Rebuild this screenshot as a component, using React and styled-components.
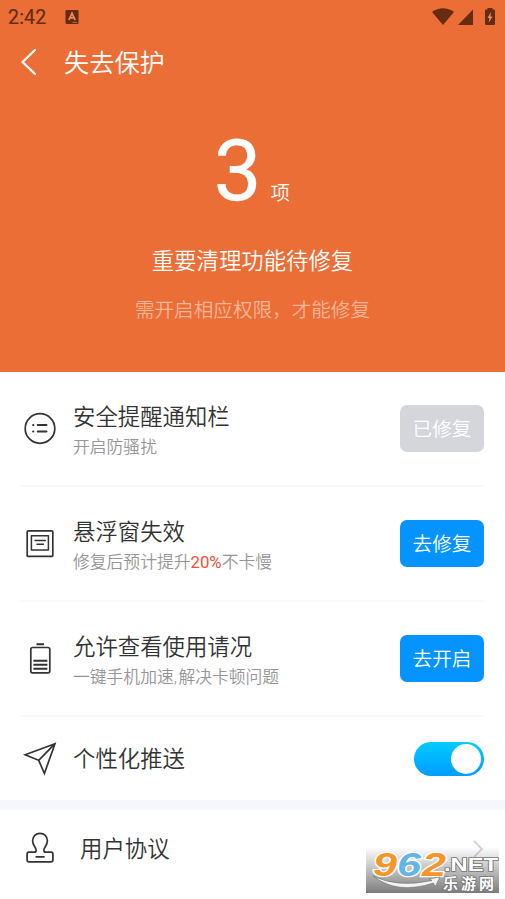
import React from "react";
import styled, { createGlobalStyle } from "styled-components";

const GlobalStyle = createGlobalStyle`
  * { box-sizing: border-box; }
  body {
    margin: 0;
    background: #fff;
    font-family: Roboto, "Noto Sans CJK SC DemiLight", "Noto Sans CJK SC", sans-serif;
    font-weight: 350;
    overflow: hidden;
  }
`;

const Screen = styled.div`
  position: relative;
  width: 505px;
  height: 899px;
  background: #fff;
  display: flex;
  flex-direction: column;
  overflow: hidden;
`;

const Hero = styled.header`
  height: 372px;
  flex: none;
  background: #eb6e37;
  color: #fff;
`;

const StatusBar = styled.div`
  height: 35px;
  padding: 0 8px 0 8px;
  display: flex;
  align-items: center;
  color: #652c12;
`;

const Clock = styled.span`
  width: 57px;
  font-size: 19.5px;
  line-height: 35px;
  font-weight: 400;
  letter-spacing: 0.2px;
  -webkit-text-stroke: 0.2px currentColor;
`;

const StatusIcons = styled.div`
  margin-left: auto;
  display: flex;
`;

const TitleBar = styled.div`
  height: 54px;
  padding-left: 20px;
  display: flex;
  align-items: center;
`;

const Title = styled.h1`
  margin: 0 0 0 26px;
  padding-top: 3px;
  font-size: 25.2px;
  line-height: 54px;
  font-weight: inherit;
`;

const Summary = styled.section`
  display: flex;
  flex-direction: column;
  align-items: center;
`;

const Count = styled.div`
  height: 152px;
  padding-top: 33px;
  margin-right: 1px;
  display: flex;
  align-items: baseline;
  font-size: 85px;
  line-height: 99px;
  font-weight: 400;
  -webkit-text-stroke: 0.4px currentColor;
`;

const Unit = styled.span`
  margin-left: 9px;
  font-size: 19.6px;
  line-height: 24px;
  font-weight: 350;
  -webkit-text-stroke: 0;
`;

const Headline = styled.div`
  font-size: 22.4px;
  line-height: 40px;
`;

const Hint = styled.div`
  margin-top: 10px;
  font-size: 19.6px;
  line-height: 40px;
  color: #f7b597;
`;

const List = styled.main`
  flex: none;
  padding: 0 21px 0 20px;
`;

const Row = styled.div`
  height: ${(p) => p.$height}px;
  display: flex;
  align-items: center;
  border-bottom: ${(p) => (p.$last ? "none" : "2px solid #f9f9fa")};
`;

const RowIcon = styled.svg`
  width: 40px;
  height: 40px;
  flex: none;
  margin-right: ${(p) => p.$gap || 13}px;
  fill: none;
  stroke: #333;
  stroke-width: 1.7;
  stroke-linecap: round;
  stroke-linejoin: round;
`;

const RowText = styled.div`
  flex: 1;
  padding-top: ${(p) => (p.$single ? 1 : 5)}px;
  white-space: nowrap;
`;

const RowTitle = styled.div`
  font-size: 22.4px;
  line-height: 32px;
  color: #333;
`;

const RowSub = styled.div`
  font-size: 16.8px;
  line-height: 29px;
  color: #969696;
`;

const Accent = styled.span`
  font-weight: 400;
  color: #ed4f3b;
`;

const Comma = styled.span`
  margin-right: 1.5px;
`;

const ActionButton = styled.button`
  width: 84px;
  height: 47px;
  padding: 3px 0 0;
  border: 0;
  border-radius: 7px;
  background: ${(p) => (p.$done ? "#d5d6dc" : "#0594ff")};
  color: #fff;
  font-family: inherit;
  font-weight: inherit;
  font-size: 19.6px;
  line-height: 44px;
`;

const Toggle = styled.div`
  width: 70px;
  height: 34px;
  padding: 2px 3px;
  border-radius: 17px;
  display: flex;
  justify-content: flex-end;
  background: linear-gradient(#00ccff, #009cff);
`;

const Knob = styled.span`
  width: 30px;
  height: 30px;
  border-radius: 50%;
  background: #fff;
`;

const Band = styled.div`
  height: 10px;
  flex: none;
  background: #f5f7fd;
`;

const Watermark = styled.svg`
  position: absolute;
  left: 366px;
  top: 845px;
`;

const ListIcon = () => (
  <RowIcon viewBox="0 0 40 40">
    <circle cx="20" cy="19.5" r="14.8" />
    <path d="M17.7 16.1h8.8M17.7 22.5h8.8" strokeWidth="2" />
    <path d="M13.2 16.1h.1M13.2 22.5h.1" strokeWidth="2.2" />
  </RowIcon>
);

const WindowIcon = () => (
  <RowIcon viewBox="0 0 40 40">
    <rect x="7.2" y="6.8" width="25.6" height="25.6" rx="1" />
    <path d="M11.4 11.8h17v14.2h-17zM15 16.6h10.4M17 20.2h6.4" strokeWidth="1.5" />
  </RowIcon>
);

const BatteryIcon = () => (
  <RowIcon viewBox="0 0 40 40">
    <rect x="10.8" y="8.5" width="19" height="25.4" rx="1.8" />
    <path d="M16.5 5.2h7.5M13.4 21.7h14M13.4 25.7h14M13.4 29.7h14" strokeLinecap="butt" strokeWidth="1.9" />
  </RowIcon>
);

const PlaneIcon = () => (
  <RowIcon viewBox="0 0 40 40">
    <path d="M35 4.7L5.2 15.7L18.7 21.3L24.4 34.5ZM35 4.7L18.7 21.3" strokeLinejoin="miter" />
  </RowIcon>
);

const StampIcon = () => (
  <RowIcon viewBox="0 0 40 40" $gap={20}>
    <path transform="translate(0 -1.2)" d="M9 24.4H14.2Q16.4 24.4 16.1 22.2C15.8 19 12.6 17.8 12.6 12.9A7.4 7.4 0 0 1 27.4 12.9C27.4 17.8 24.2 19 23.9 22.2Q23.6 24.4 25.8 24.4H31Q32.9 24.4 32.9 26.3V32.2Q32.9 34.1 31 34.1H9Q7.1 34.1 7.1 32.2V26.3Q7.1 24.4 9 24.4ZM16.2 29H24" />
  </RowIcon>
);

const actions = [
  { icon: <ListIcon />, title: "安全提醒通知栏", sub: "开启防骚扰", action: "已修复", done: true },
  {
    icon: <WindowIcon />,
    title: "悬浮窗失效",
    sub: <>修复后预计提升<Accent>20%</Accent>不卡慢</>,
    action: "去修复",
  },
  {
    icon: <BatteryIcon />,
    title: "允许查看使用请况",
    sub: <>一键手机加速<Comma>,</Comma>解决卡顿问题</>,
    action: "去开启",
  },
];

export default function App() {
  return (
    <Screen>
      <GlobalStyle />
      <Hero>
        <StatusBar>
          <Clock>2:42</Clock>
          <svg width="14" height="15" viewBox="0 0 14 15">
            <rect x="0.5" y="0" width="13" height="14" rx="1.2" fill="currentColor" />
            <path d="M3.8 10L7 3.3L10.2 10M5 7.8H9" fill="none" stroke="#f08c60" strokeWidth="1.7" />
            <path d="M7.5 12.4h4.5" stroke="#c9784f" strokeWidth="0.8" />
          </svg>
          <StatusIcons>
            <svg width="66" height="20" viewBox="0 0 66 20" fill="currentColor">
              <path d="M1 4Q12 -3.5 23 4L12 17Z" />
              <path d="M42 1.5V17H27Z" />
              <path d="M56.5 -0.5h5v2h1.3q1.2 0 1.2 1.2v13.1q0 1.2-1.2 1.2h-7.6q-1.2 0-1.2-1.2v-13.1q0-1.2 1.2-1.2h1.3z" />
              <path d="M60 4L56.5 10H58.5L57.7 14.8L61.5 8.4H59.4Z" fill="#f08c60" />
            </svg>
          </StatusIcons>
        </StatusBar>
        <TitleBar>
          <svg width="18" height="28" viewBox="0 0 18 28" fill="none" stroke="#fff" strokeWidth="2.3">
            <path d="M15 2L2.5 14L15 26" strokeLinecap="round" strokeLinejoin="round" />
          </svg>
          <Title>失去保护</Title>
        </TitleBar>
        <Summary>
          <Count>3<Unit>项</Unit></Count>
          <Headline>重要清理功能待修复</Headline>
          <Hint>需开启相应权限，才能修复</Hint>
        </Summary>
      </Hero>
      <List>
        {actions.map((item) => (
          <Row key={item.title} $height={115}>
            {item.icon}
            <RowText>
              <RowTitle>{item.title}</RowTitle>
              <RowSub>{item.sub}</RowSub>
            </RowText>
            <ActionButton $done={item.done}>{item.action}</ActionButton>
          </Row>
        ))}
        <Row $height={83} $last>
          <PlaneIcon />
          <RowText $single><RowTitle>个性化推送</RowTitle></RowText>
          <Toggle><Knob /></Toggle>
        </Row>
      </List>
      <Band />
      <List>
        <Row $height={77} $last>
          <StampIcon />
          <RowText $single><RowTitle>用户协议</RowTitle></RowText>
          <svg width="12" height="20" viewBox="0 0 12 20" fill="none" stroke="#cfd0dc" strokeWidth="1.8">
            <path d="M2 2L10 10L2 18" />
          </svg>
        </Row>
      </List>
      <Watermark width="134" height="48" viewBox="0 0 134 48">
        <defs>
          <linearGradient id="shade" x1="0" y1="0" x2="0" y2="1">
            <stop offset="0" stopColor="#777" stopOpacity="0" />
            <stop offset="0.45" stopColor="#777" stopOpacity="0.42" />
            <stop offset="1" stopColor="#707070" stopOpacity="0.92" />
          </linearGradient>
        </defs>
        <rect y="2" width="133" height="46" fill="url(#shade)" />
        <g fontFamily="Liberation Sans" fontWeight="700" fontStyle="italic" fontSize="33" stroke="#fff" strokeWidth="2.5" paintOrder="stroke">
          <text x="7" y="30.5" fill="#f7942a" textLength="24" lengthAdjust="spacingAndGlyphs">9</text>
          <text x="31" y="30.5" fill="#63b5e8" textLength="24" lengthAdjust="spacingAndGlyphs">6</text>
          <text x="56" y="30.5" fill="#f7942a" textLength="24" lengthAdjust="spacingAndGlyphs">2</text>
        </g>
        <path d="M7 31Q31 43 66 35.5L63 34L74 32L69 42L67.5 38Q31 50 7 31Z" fill="#f3f3f3" stroke="#777" strokeWidth="0.7" />
        <g fill="#fff" stroke="#777" strokeWidth="1.5" paintOrder="stroke" fontWeight="700">
          <text x="78" y="25.5" fontFamily="Liberation Sans" fontSize="17.5" textLength="54" lengthAdjust="spacingAndGlyphs">.NET</text>
          <text x="77" y="43.5" fontFamily="Noto Sans CJK SC" fontSize="15" textLength="51">乐游网</text>
        </g>
      </Watermark>
    </Screen>
  );
}
